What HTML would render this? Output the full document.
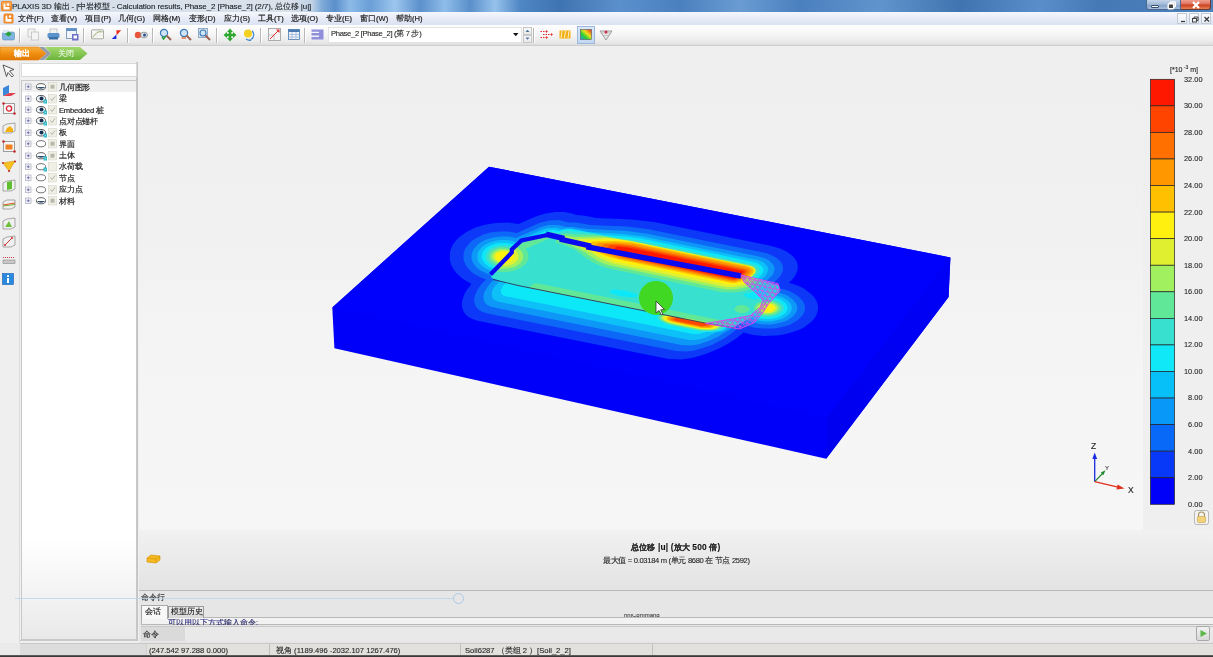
<!DOCTYPE html>
<html><head><meta charset="utf-8">
<style>
*{margin:0;padding:0;box-sizing:border-box}
html,body{width:1213px;height:657px;overflow:hidden;-webkit-font-smoothing:antialiased;background:#efefef;font-family:"Liberation Sans",sans-serif;font-size:8px;color:#000}
.a{position:absolute}
.row,.mi,.lg,#title .t,.a{will-change:transform}
.row,.mi{-webkit-text-stroke:0.18px #222}
.a{-webkit-text-stroke:0.12px #333}
.lg{-webkit-text-stroke:0.1px #333}
#title{left:0;top:0;width:1213px;height:12px;background:linear-gradient(90deg,#c9d6e4 0,#d6dfe9 40px,#d9e1ea 290px,#c0d2e6 312px,#7eaad8 322px,#5a8fcb 335px,#8dbbe8 350px,#6a9ed6 370px,#9cc6ee 395px,#5b90cc 420px,#8fbde9 445px,#5a8fca 470px,#96c2ec 495px,#4f86c4 520px,#3f74b2 560px,#5a90cc 620px,#4a80bf 680px,#6a9cd2 740px,#4a80bf 800px,#5f94cc 880px,#3f74b0 960px,#5a8ecb 1040px,#4479b6 1100px,#4b81bc 1213px)}
.mdi{top:13px;width:10px;height:11px;background:linear-gradient(#fbfcfe,#e6ecf6);border:1px solid #c4cad4}
#title .t{left:12px;top:1px;font-size:8px;color:#101820;white-space:nowrap;letter-spacing:-0.1px}
#menu{left:0;top:12px;width:1213px;height:13px;background:linear-gradient(#f5f7fc,#e4e9f6 60%,#dbe2f2)}
.mi{position:absolute;top:14px;font-size:7.6px;color:#202020;white-space:nowrap}
#tool{left:0;top:25px;width:1213px;height:21px;background:linear-gradient(#fefefe,#f6f6f6 45%,#e9e9e9 85%,#dddddd);border-bottom:1px solid #cfcfcf}
.sep{position:absolute;top:28px;width:2px;height:15px;border-left:1px solid #b8b8b8;border-right:1px solid #fff}
svg{position:absolute;overflow:visible}
#left{left:0;top:46px;width:20px;height:597px;background:#efefef}
#panel{left:20px;top:62px;width:118px;height:579px;border-right:2px solid #c4c4c4;border-bottom:1px solid #c9c9c9;background:#f0f0f0}
#search{left:21px;top:63px;width:116px;height:14px;background:#fff;border:1px solid #dadada}
#tree{left:21px;top:80px;width:116px;height:560px;border:1px solid #c8c8c8;background:linear-gradient(#fff 0,#fff 82%,#e9e9e9 100%)}
.row{position:absolute;left:59px;font-size:7.6px;letter-spacing:-0.2px;color:#222;white-space:nowrap;height:11px;line-height:11px}
#view{left:139px;top:46px;width:1074px;height:484px;background:#f2f2f2}
#cap{left:139px;top:530px;width:1074px;height:60px;background:linear-gradient(#f1f1f1,#e3e3e3)}
#cmd{left:139px;top:590px;width:1074px;height:53px;background:#e6e6e6;border-top:1px solid #b9b9b9}
#status{left:0;top:643px;width:1213px;height:12px;background:#e3e1de;border-top:1px solid #c8c8c8}
#bot{left:0;top:655px;width:1213px;height:2px;background:linear-gradient(#6a6a6a,#2a2a2a)}
.lg{position:absolute;left:1172px;width:30.5px;text-align:right;font-size:7.4px;color:#1a1a1a;white-space:nowrap}
</style></head><body>
<div id="title" class="a"><span class="a t">PLAXIS 3D 输出 - [中岩模型 - Calculation results, Phase_2 [Phase_2] (2/7), 总位移 |u|]</span></div>
<svg style="left:0;top:0" width="13" height="12"><rect x="1" y="1" width="11" height="10" rx="1.5" fill="#f08a2a"/><rect x="2" y="2" width="9" height="4" fill="#f6b060" opacity=".7"/><path d="M3.5 4.5 L5 3 L5.5 7 L9.5 7 L9.5 9.5 L3.5 9.5 Z" fill="#fff"/><circle cx="8" cy="4.5" r="1.3" fill="#fff"/></svg>
<div class="a" style="left:1146px;top:0;width:18px;height:10px;border:1px solid #4b6a92;border-top:0;border-radius:0 0 0 3px;background:linear-gradient(#c6d6ea,#9fb8d6 50%,#7f9dc4 51%,#a9c0dc)"></div>
<div class="a" style="left:1151px;top:5px;width:8px;height:3px;background:#fff;border:0.6px solid #3a5070;border-radius:1px"></div>
<div class="a" style="left:1163px;top:0;width:18px;height:10px;border:1px solid #4b6a92;border-top:0;border-left:0;background:linear-gradient(#c6d6ea,#9fb8d6 50%,#7f9dc4 51%,#a9c0dc)"></div>
<svg style="left:1167px;top:1px" width="10" height="9"><rect x="3" y="0.8" width="5.5" height="5" rx="1" fill="#d8d8d8" stroke="#fff" stroke-width="1.2"/><rect x="1.2" y="2.8" width="5.5" height="5" rx="1" fill="#444" stroke="#fff" stroke-width="1.4"/></svg>
<div class="a" style="left:1181px;top:0;width:30px;height:10px;border:1px solid #6b3a30;border-top:0;border-left:0;border-radius:0 0 3px 0;background:linear-gradient(#f0a090,#e07060 45%,#c8401c 55%,#e8805a)"></div>
<svg style="left:1191px;top:1px" width="10" height="8"><path d="M2 1 L8 7 M8 1 L2 7" stroke="#fff" stroke-width="2.2"/></svg>
<div id="menu" class="a"></div>
<svg style="left:3px;top:13px" width="12" height="12"><rect x="0.5" y="0.5" width="10" height="10" rx="1.5" fill="#f08a2a"/><path d="M2.5 3.5 L4 2 L4.5 6 L8.5 6 L8.5 8.7 L2.5 8.7 Z" fill="#fff"/><circle cx="7" cy="3.5" r="1.2" fill="#fff"/></svg>
<div class="mi" style="left:18px">文件(F)</div>
<div class="mi" style="left:51px">查看(V)</div>
<div class="mi" style="left:85px">项目(P)</div>
<div class="mi" style="left:118px">几何(G)</div>
<div class="mi" style="left:153px">网格(M)</div>
<div class="mi" style="left:189px">变形(D)</div>
<div class="mi" style="left:224px">应力(S)</div>
<div class="mi" style="left:258px">工具(T)</div>
<div class="mi" style="left:291px">选项(O)</div>
<div class="mi" style="left:326px">专业(E)</div>
<div class="mi" style="left:360px">窗口(W)</div>
<div class="mi" style="left:396px">帮助(H)</div>
<div class="a mdi" style="left:1177px"><svg width="10" height="11" style="position:absolute;left:0;top:0"><path d="M3 7.5 H7" stroke="#333" stroke-width="1.2"/></svg></div>
<div class="a mdi" style="left:1189px"><svg width="10" height="11" style="position:absolute;left:0;top:0"><rect x="2.5" y="4.5" width="4" height="3.5" fill="none" stroke="#333" stroke-width=".9"/><path d="M4 4.5 V3 H8 V6.5 H6.5" fill="none" stroke="#333" stroke-width=".9"/></svg></div>
<div class="a mdi" style="left:1201px"><svg width="10" height="11" style="position:absolute;left:0;top:0"><path d="M2.5 3 L7 7.5 M7 3 L2.5 7.5" stroke="#333" stroke-width="1.1"/></svg></div>
<div id="tool" class="a"></div>
<div class="sep" style="left:19px"></div><div class="sep" style="left:83px"></div><div class="sep" style="left:127px"></div><div class="sep" style="left:152px"></div><div class="sep" style="left:216px"></div><div class="sep" style="left:260px"></div><div class="sep" style="left:304px"></div><div class="sep" style="left:533px"></div>
<!-- toolbar icons -->
<svg style="left:2px;top:28px" width="13" height="13"><rect x="0.5" y="4" width="12" height="8" rx="1.5" fill="#7fb4e0" stroke="#5a8cc0" stroke-width=".6"/><rect x="1" y="2" width="6" height="3" fill="#d8e6f2"/><path d="M3 6 L6.5 3.5 L10 6 L6.5 8.5Z" fill="#2aa23a"/></svg>
<svg style="left:27px;top:28px" width="13" height="13"><rect x="1" y="1" width="7" height="8" fill="#f4f4f4" stroke="#b8b8b8" stroke-width=".7"/><rect x="4.5" y="4" width="7" height="8" fill="#f4f4f4" stroke="#b8b8b8" stroke-width=".7"/></svg>
<svg style="left:47px;top:28px" width="13" height="13"><rect x="3" y="1" width="7" height="5" fill="#f2f2f2" stroke="#aaa" stroke-width=".6"/><rect x="0.5" y="5" width="12" height="5" rx="1.5" fill="#5a92cc"/><rect x="2" y="9" width="9" height="2.5" fill="#3c6ea8"/></svg>
<svg style="left:66px;top:28px" width="13" height="13"><rect x="0.5" y="0.5" width="10" height="10" fill="#f0f4f8" stroke="#6a8ab0" stroke-width=".8"/><rect x="0.5" y="0.5" width="10" height="2.5" fill="#5d8fca"/><rect x="6" y="6" width="6.5" height="6.5" fill="#6f6fc8"/><rect x="7.5" y="7.5" width="3.5" height="3" fill="#fff"/></svg>
<svg style="left:91px;top:29px" width="13" height="11"><rect x="0.5" y="0.8" width="12" height="9" rx="0.8" fill="#f6f6f2" stroke="#a0a098" stroke-width=".9"/><path d="M6 1 V10 M0.5 6 H12.5" stroke="#e0e0dc" stroke-width=".5"/><path d="M1.5 8.5 L4.5 5 Q6 2.8 8 2.8 L11.5 2.8" fill="none" stroke="#8aa868" stroke-width=".9"/></svg>
<svg style="left:111px;top:28px" width="11" height="13"><path d="M5.4 2.3 L10.2 2.3 L5.6 7.2 Z" fill="#f02818"/><path d="M0.8 10.9 L5.4 10.9 L5.4 6.6 Z" fill="#1828e8"/></svg>
<svg style="left:134px;top:30px" width="14" height="10"><circle cx="4" cy="5" r="3.2" fill="#e8553a"/><ellipse cx="10" cy="5" rx="3.5" ry="2.8" fill="#dde6f0" stroke="#666" stroke-width=".6"/><circle cx="10.5" cy="5" r="1.5" fill="#2a5080"/></svg>
<svg style="left:159px;top:28px" width="13" height="13"><circle cx="5" cy="5" r="3.6" fill="#cfe4f6" stroke="#3a7ab8" stroke-width="1.2"/><path d="M7.5 7.5 L12 12" stroke="#a06050" stroke-width="2"/><path d="M3 9 L4.5 11 L7 8" stroke="#20a030" stroke-width="1.4" fill="none"/></svg>
<svg style="left:179px;top:28px" width="13" height="13"><circle cx="5" cy="5" r="3.6" fill="#cfe4f6" stroke="#3a7ab8" stroke-width="1.2"/><path d="M7.5 7.5 L12 12" stroke="#a06050" stroke-width="2"/><path d="M2.5 10 H7" stroke="#e06030" stroke-width="1.3"/></svg>
<svg style="left:198px;top:28px" width="13" height="13"><rect x="0.5" y="0.5" width="9" height="9" fill="#d8e4f0" stroke="#7a9ac0" stroke-width=".8"/><circle cx="5" cy="5" r="3" fill="#cfe4f6" stroke="#3a7ab8" stroke-width="1.1"/><path d="M7.5 7.5 L12 12" stroke="#a06050" stroke-width="2"/></svg>
<svg style="left:223px;top:28px" width="14" height="14"><path d="M7 0.5 L10 4 H8.3 V5.7 H10 V4 L13.5 7 L10 10 V8.3 H8.3 V10 H10 L7 13.5 L4 10 H5.7 V8.3 H4 V10 L0.5 7 L4 4 V5.7 H5.7 V4 H4 Z" fill="#30a830"/></svg>
<svg style="left:243px;top:28px" width="14" height="14"><circle cx="5" cy="5.5" r="4" fill="#f4d020"/><path d="M9 2 Q13 5 10 11 L7 12 L9.5 9 Q11 6 9 4 Z" fill="#3a86d0"/><path d="M3 11 Q6 13 8 12" stroke="#3a86d0" stroke-width="1.5" fill="none"/></svg>
<svg style="left:268px;top:28px" width="13" height="13"><rect x="0.5" y="0.5" width="12" height="12" fill="#f6f6f6" stroke="#9a9a9a" stroke-width=".8"/><path d="M0.5 7 H6 V12.5" fill="none" stroke="#aaa" stroke-width=".6"/><path d="M2 11 L11 2" stroke="#e03030" stroke-width="1"/><path d="M8 1.5 L11.5 1.5 L11.5 5" fill="#e03030"/></svg>
<svg style="left:288px;top:29px" width="12" height="11"><rect x="0.5" y="0.5" width="11" height="10" fill="#eef3f8" stroke="#4a7ab0" stroke-width=".8"/><rect x="0.5" y="0.5" width="11" height="2.5" fill="#4a7ab0"/><path d="M0.5 5.5 H11.5 M0.5 8 H11.5 M4 3 V10.5 M8 3 V10.5" stroke="#8aaad0" stroke-width=".6"/></svg>
<svg style="left:311px;top:29px" width="13" height="11"><path d="M0.5 0.5 H12.5 V10.5 H0.5 V8 H8 V6.5 H0.5 V4 H8 V2.8 H0.5 Z" fill="#8f8fdc"/></svg>
<div class="a" style="left:328px;top:27px;width:194px;height:16px;background:#fff;border:1px solid #e4e4e4"></div>
<div class="a" style="left:331px;top:29px;font-size:7.6px;color:#222;white-space:nowrap;letter-spacing:-0.3px">Phase_2 [Phase_2] (第 7 步)</div>
<svg style="left:513px;top:33px" width="6" height="4"><path d="M0 0 H5.5 L2.75 3.2Z" fill="#111"/></svg>
<div class="a" style="left:523px;top:27px;width:9px;height:8px;background:linear-gradient(#fafafa,#e8e8e8);border:1px solid #c8c8c8"></div>
<div class="a" style="left:523px;top:35px;width:9px;height:8px;background:linear-gradient(#fafafa,#e8e8e8);border:1px solid #c8c8c8"></div>
<svg style="left:525px;top:29px" width="6" height="12"><path d="M0.5 3 L2.5 0.8 L4.5 3Z M0.5 8.5 L2.5 10.7 L4.5 8.5Z" fill="#4a6fa0"/></svg>
<svg style="left:540px;top:29px" width="14" height="11"><path d="M0.5 2.5 H6 M3 5.5 H11 M0.5 8.5 H6" stroke="#e82a2a" stroke-width="1" stroke-dasharray="1.5 1"/><path d="M6 1 L8 2.5 L6 4Z M11 4 L13 5.5 L11 7Z M6 7 L8 8.5 L6 10Z" fill="#e82a2a"/></svg>
<svg style="left:559px;top:30px" width="12" height="9"><rect x="0.5" y="0.5" width="11" height="8" fill="#f2b010"/><path d="M3 1 L2 8 M6.5 1 L5.5 8 M10 1 L9 8" stroke="#fff" stroke-width="1" opacity=".8"/></svg>
<div class="a" style="left:577px;top:26px;width:18px;height:18px;background:linear-gradient(#dae8f8,#c4d8f0);border:1px solid #9ab8dc"></div>
<svg style="left:580px;top:29px" width="12" height="11"><defs><linearGradient id="rb" x1="0" y1="1" x2="1" y2="0"><stop offset="0" stop-color="#20a0e0"/><stop offset=".35" stop-color="#30d030"/><stop offset=".6" stop-color="#f0e020"/><stop offset="1" stop-color="#e82020"/></linearGradient></defs><rect x="0.5" y="0.5" width="11" height="10" fill="url(#rb)" stroke="#555" stroke-width=".6"/></svg>
<svg style="left:599px;top:29px" width="14" height="12"><path d="M1 2 H13 L7 11 Z" fill="#e8e8e8" stroke="#888" stroke-width=".8"/><path d="M3 4 H11 M4.5 6.5 H9.5" stroke="#aaa" stroke-width=".6"/><circle cx="7" cy="3" r="1.5" fill="#d03050"/></svg>

<div id="left" class="a"></div>
<!-- breadcrumb -->
<svg style="left:0;top:46px" width="90" height="15"><defs><linearGradient id="og" x1="0" y1="0" x2="0" y2="1"><stop offset="0" stop-color="#f7b040"/><stop offset=".5" stop-color="#f08f10"/><stop offset="1" stop-color="#e07800"/></linearGradient><linearGradient id="gg" x1="0" y1="0" x2="0" y2="1"><stop offset="0" stop-color="#a2d86e"/><stop offset="1" stop-color="#6cb43a"/></linearGradient></defs>
<path d="M45 1 H80 L87.5 7.5 L80 14 H45 L51 7.5Z" fill="url(#gg)"/>
<path d="M39 1 L46.5 7.5 L39 14 H44 L51 7.5 L44 1Z" fill="#949cac"/>
<path d="M0 1 H38.5 L46 7.5 L38.5 14 H0Z" fill="url(#og)" stroke="#e07a10" stroke-width=".6"/>
</svg>
<div class="a" style="left:14px;top:48px;font-size:8px;color:#fff;font-weight:bold;white-space:nowrap;-webkit-text-stroke:0.1px #fff">输出</div>
<div class="a" style="left:58px;top:48px;font-size:8px;color:#eaf6e0;white-space:nowrap;-webkit-text-stroke:0.1px #eaf6e0">关闭</div>
<!-- left vertical toolbar -->
<svg style="left:2px;top:64px" width="14" height="14"><path d="M1 1 L12 5.5 L7.5 7 L11.5 11.5 L10 13 L6 8.5 L4.5 12.5 Z" fill="#fafafa" stroke="#444" stroke-width=".9"/></svg>
<svg style="left:2px;top:84px" width="14" height="13"><path d="M1 4 L7 1 L7 9 L1 12Z" fill="#3a86d8"/><path d="M1 12 L7 9 L14 9 L9 12Z" fill="#e04050"/></svg>
<svg style="left:2px;top:102px" width="14" height="14"><rect x="1.5" y="1.5" width="11" height="10" fill="#f6f6f6" stroke="#888" stroke-width=".8"/><circle cx="7" cy="6.5" r="2.6" fill="none" stroke="#e02030" stroke-width="1.3"/><circle cx="1.5" cy="1.5" r="1.2" fill="#c02020"/><circle cx="12.5" cy="11.5" r="1.2" fill="#c02020"/></svg>
<svg style="left:2px;top:121px" width="14" height="14"><path d="M1 5 L5 3 L13 2 L13 10 L9 12 L1 12Z" fill="#f0f0f0" stroke="#888" stroke-width=".7"/><path d="M3 11 L5 7 L8 5 L11 8 L11 11Z" fill="#f4b010"/></svg>
<svg style="left:2px;top:140px" width="14" height="14"><rect x="1.5" y="1.5" width="11" height="10" fill="#f6f6f6" stroke="#888" stroke-width=".8"/><rect x="3.5" y="4.5" width="7" height="5" fill="#f08020"/><circle cx="1.5" cy="1.5" r="1.2" fill="#c02020"/><circle cx="12.5" cy="11.5" r="1.2" fill="#c02020"/></svg>
<svg style="left:2px;top:160px" width="14" height="13"><path d="M1 3 L13 1 L7 11Z" fill="#f8c020" stroke="#d09000" stroke-width=".6"/><circle cx="1" cy="3" r="1.1" fill="#c03030"/><circle cx="13" cy="1.5" r="1.1" fill="#c03030"/><circle cx="7" cy="11" r="1.1" fill="#c03030"/></svg>
<svg style="left:2px;top:179px" width="14" height="14"><path d="M1 4 L5 2 L13 1 L13 10 L9 12 L1 12Z" fill="#f0f0f0" stroke="#888" stroke-width=".7"/><path d="M5 3 L10 2 L10 10 L5 11Z" fill="#60c030"/></svg>
<svg style="left:2px;top:198px" width="14" height="13"><path d="M1 4 L5 2 L13 2 L13 9 L9 11 L1 11Z" fill="#f0f0f0" stroke="#888" stroke-width=".7"/><path d="M1 7 L13 5" stroke="#e05030" stroke-width="1"/><path d="M1 8 L13 6.5" stroke="#70b030" stroke-width="1"/></svg>
<svg style="left:2px;top:217px" width="14" height="14"><path d="M1 4 L5 2 L13 1 L13 10 L9 12 L1 12Z" fill="#f0f0f0" stroke="#888" stroke-width=".7"/><path d="M3 10 L7 4 L10 10Z" fill="#70c040"/></svg>
<svg style="left:2px;top:235px" width="14" height="14"><path d="M1 4 L5 2 L13 1 L13 10 L9 12 L1 12Z" fill="#f0f0f0" stroke="#888" stroke-width=".7"/><path d="M3 10 L10 3" stroke="#d03030" stroke-width="1"/><circle cx="3" cy="10" r="1" fill="#d03030"/><circle cx="10" cy="3" r="1" fill="#d03030"/></svg>
<svg style="left:2px;top:256px" width="14" height="9"><path d="M1 1.5 H13" stroke="#d04040" stroke-width="1" stroke-dasharray="1 1"/><rect x="1" y="4" width="12" height="3.5" fill="#c8c8c8" stroke="#888" stroke-width=".6"/></svg>
<svg style="left:2px;top:273px" width="13" height="13"><rect x="0.5" y="0.5" width="11" height="11" fill="#2a8ae0" stroke="#1a60b0" stroke-width=".6"/><rect x="5" y="2.2" width="2" height="1.8" fill="#fff"/><rect x="5" y="5" width="2" height="5" fill="#fff"/></svg>
<div class="a" style="left:19px;top:62px;width:1px;height:581px;background:#dcdcdc"></div>
<div id="panel" class="a"></div>
<div id="search" class="a"></div>
<div id="tree" class="a"></div>
<div class="a" style="left:22px;top:81px;width:114px;height:11px;background:#f0f0f0"></div>
<div class="a" style="left:28px;top:91px;width:0;height:111px;border-left:1px dotted #dedede"></div>

<svg style="left:25px;top:81.3px" width="35" height="12">
<rect x="0.5" y="3" width="5.5" height="5.5" fill="#f4f4fa" stroke="#9a9ab0" stroke-width=".6"/><path d="M1.8 5.75 H4.7 M3.25 4.3 V7.2" stroke="#4a4a90" stroke-width=".7"/><path d="M6.5 5.75 H10" stroke="#c4c4c4" stroke-width=".6" stroke-dasharray="1 1"/>
<ellipse cx="16" cy="5.75" rx="4.6" ry="3.1" fill="#fff" stroke="#3a3a3a" stroke-width=".8"/><path d="M11.6 6 Q16 9.5 20.4 6Z" fill="#2a4a70"/>
<rect x="23.5" y="1.5" width="8" height="8.5" fill="#efefe6" stroke="#d4d4c8" stroke-width=".6"/>
<rect x="25.5" y="3.7" width="4" height="4" fill="#b8b8a8"/>
</svg>
<div class="row" style="top:81.8px">几何图形</div>
<svg style="left:25px;top:92.7px" width="35" height="12">
<rect x="0.5" y="3" width="5.5" height="5.5" fill="#f4f4fa" stroke="#9a9ab0" stroke-width=".6"/><path d="M1.8 5.75 H4.7 M3.25 4.3 V7.2" stroke="#4a4a90" stroke-width=".7"/><path d="M6.5 5.75 H10" stroke="#c4c4c4" stroke-width=".6" stroke-dasharray="1 1"/>
<ellipse cx="16" cy="5.75" rx="4.6" ry="3.3" fill="#eef4fa" stroke="#3a3a3a" stroke-width=".8"/><circle cx="16.5" cy="5.5" r="2" fill="#1a3050"/>
<rect x="18.5" y="6.5" width="3.5" height="4" fill="#30b8c8"/><path d="M19.5 9 L21 8" stroke="#fff" stroke-width=".6"/>
<rect x="23.5" y="1.5" width="8" height="8.5" fill="#efefe6" stroke="#d4d4c8" stroke-width=".6"/>
<path d="M25.5 5.5 L27 7.5 L30 3.5" fill="none" stroke="#9a9a90" stroke-width=".7"/>
</svg>
<div class="row" style="top:93.2px">梁</div>
<svg style="left:25px;top:104.0px" width="35" height="12">
<rect x="0.5" y="3" width="5.5" height="5.5" fill="#f4f4fa" stroke="#9a9ab0" stroke-width=".6"/><path d="M1.8 5.75 H4.7 M3.25 4.3 V7.2" stroke="#4a4a90" stroke-width=".7"/><path d="M6.5 5.75 H10" stroke="#c4c4c4" stroke-width=".6" stroke-dasharray="1 1"/>
<ellipse cx="16" cy="5.75" rx="4.6" ry="3.3" fill="#eef4fa" stroke="#3a3a3a" stroke-width=".8"/><circle cx="16.5" cy="5.5" r="2" fill="#1a3050"/>
<rect x="18.5" y="6.5" width="3.5" height="4" fill="#30b8c8"/><path d="M19.5 9 L21 8" stroke="#fff" stroke-width=".6"/>
<rect x="23.5" y="1.5" width="8" height="8.5" fill="#efefe6" stroke="#d4d4c8" stroke-width=".6"/>
<path d="M25.5 5.5 L27 7.5 L30 3.5" fill="none" stroke="#9a9a90" stroke-width=".7"/>
</svg>
<div class="row" style="top:104.5px">Embedded 桩</div>
<svg style="left:25px;top:115.4px" width="35" height="12">
<rect x="0.5" y="3" width="5.5" height="5.5" fill="#f4f4fa" stroke="#9a9ab0" stroke-width=".6"/><path d="M1.8 5.75 H4.7 M3.25 4.3 V7.2" stroke="#4a4a90" stroke-width=".7"/><path d="M6.5 5.75 H10" stroke="#c4c4c4" stroke-width=".6" stroke-dasharray="1 1"/>
<ellipse cx="16" cy="5.75" rx="4.6" ry="3.3" fill="#eef4fa" stroke="#3a3a3a" stroke-width=".8"/><circle cx="16.5" cy="5.5" r="2" fill="#1a3050"/>
<rect x="18.5" y="6.5" width="3.5" height="4" fill="#30b8c8"/><path d="M19.5 9 L21 8" stroke="#fff" stroke-width=".6"/>
<rect x="23.5" y="1.5" width="8" height="8.5" fill="#efefe6" stroke="#d4d4c8" stroke-width=".6"/>
<path d="M25.5 5.5 L27 7.5 L30 3.5" fill="none" stroke="#9a9a90" stroke-width=".7"/>
</svg>
<div class="row" style="top:115.9px">点对点锚杆</div>
<svg style="left:25px;top:126.8px" width="35" height="12">
<rect x="0.5" y="3" width="5.5" height="5.5" fill="#f4f4fa" stroke="#9a9ab0" stroke-width=".6"/><path d="M1.8 5.75 H4.7 M3.25 4.3 V7.2" stroke="#4a4a90" stroke-width=".7"/><path d="M6.5 5.75 H10" stroke="#c4c4c4" stroke-width=".6" stroke-dasharray="1 1"/>
<ellipse cx="16" cy="5.75" rx="4.6" ry="3.3" fill="#eef4fa" stroke="#3a3a3a" stroke-width=".8"/><circle cx="16.5" cy="5.5" r="2" fill="#1a3050"/>
<rect x="18.5" y="6.5" width="3.5" height="4" fill="#30b8c8"/><path d="M19.5 9 L21 8" stroke="#fff" stroke-width=".6"/>
<rect x="23.5" y="1.5" width="8" height="8.5" fill="#efefe6" stroke="#d4d4c8" stroke-width=".6"/>
<path d="M25.5 5.5 L27 7.5 L30 3.5" fill="none" stroke="#9a9a90" stroke-width=".7"/>
</svg>
<div class="row" style="top:127.3px">板</div>
<svg style="left:25px;top:138.1px" width="35" height="12">
<rect x="0.5" y="3" width="5.5" height="5.5" fill="#f4f4fa" stroke="#9a9ab0" stroke-width=".6"/><path d="M1.8 5.75 H4.7 M3.25 4.3 V7.2" stroke="#4a4a90" stroke-width=".7"/><path d="M6.5 5.75 H10" stroke="#c4c4c4" stroke-width=".6" stroke-dasharray="1 1"/>
<ellipse cx="16" cy="5.75" rx="4.6" ry="3.1" fill="#fff" stroke="#3a3a3a" stroke-width=".7"/>
<rect x="23.5" y="1.5" width="8" height="8.5" fill="#efefe6" stroke="#d4d4c8" stroke-width=".6"/>
<rect x="25.5" y="3.7" width="4" height="4" fill="#b8b8a8"/>
</svg>
<div class="row" style="top:138.6px">界面</div>
<svg style="left:25px;top:149.5px" width="35" height="12">
<rect x="0.5" y="3" width="5.5" height="5.5" fill="#f4f4fa" stroke="#9a9ab0" stroke-width=".6"/><path d="M1.8 5.75 H4.7 M3.25 4.3 V7.2" stroke="#4a4a90" stroke-width=".7"/><path d="M6.5 5.75 H10" stroke="#c4c4c4" stroke-width=".6" stroke-dasharray="1 1"/>
<ellipse cx="16" cy="5.75" rx="4.6" ry="3.1" fill="#fff" stroke="#3a3a3a" stroke-width=".8"/><path d="M11.6 6 Q16 9.5 20.4 6Z" fill="#2a4a70"/>
<rect x="18.5" y="6.5" width="3.5" height="4" fill="#30b8c8"/><path d="M19.5 9 L21 8" stroke="#fff" stroke-width=".6"/>
<rect x="23.5" y="1.5" width="8" height="8.5" fill="#efefe6" stroke="#d4d4c8" stroke-width=".6"/>
<rect x="25.5" y="3.7" width="4" height="4" fill="#b8b8a8"/>
</svg>
<div class="row" style="top:150.0px">土体</div>
<svg style="left:25px;top:160.9px" width="35" height="12">
<rect x="0.5" y="3" width="5.5" height="5.5" fill="#f4f4fa" stroke="#9a9ab0" stroke-width=".6"/><path d="M1.8 5.75 H4.7 M3.25 4.3 V7.2" stroke="#4a4a90" stroke-width=".7"/><path d="M6.5 5.75 H10" stroke="#c4c4c4" stroke-width=".6" stroke-dasharray="1 1"/>
<ellipse cx="16" cy="5.75" rx="4.6" ry="3.1" fill="#fff" stroke="#3a3a3a" stroke-width=".7"/>
<rect x="18.5" y="6.5" width="3.5" height="4" fill="#30b8c8"/><path d="M19.5 9 L21 8" stroke="#fff" stroke-width=".6"/>
<rect x="23.5" y="1.5" width="8" height="8.5" fill="#efefe6" stroke="#d4d4c8" stroke-width=".6"/>
</svg>
<div class="row" style="top:161.4px">水荷载</div>
<svg style="left:25px;top:172.3px" width="35" height="12">
<rect x="0.5" y="3" width="5.5" height="5.5" fill="#f4f4fa" stroke="#9a9ab0" stroke-width=".6"/><path d="M1.8 5.75 H4.7 M3.25 4.3 V7.2" stroke="#4a4a90" stroke-width=".7"/><path d="M6.5 5.75 H10" stroke="#c4c4c4" stroke-width=".6" stroke-dasharray="1 1"/>
<ellipse cx="16" cy="5.75" rx="4.6" ry="3.1" fill="#fff" stroke="#3a3a3a" stroke-width=".7"/>
<rect x="23.5" y="1.5" width="8" height="8.5" fill="#efefe6" stroke="#d4d4c8" stroke-width=".6"/>
<path d="M25.5 5.5 L27 7.5 L30 3.5" fill="none" stroke="#9a9a90" stroke-width=".7"/>
</svg>
<div class="row" style="top:172.8px">节点</div>
<svg style="left:25px;top:183.6px" width="35" height="12">
<rect x="0.5" y="3" width="5.5" height="5.5" fill="#f4f4fa" stroke="#9a9ab0" stroke-width=".6"/><path d="M1.8 5.75 H4.7 M3.25 4.3 V7.2" stroke="#4a4a90" stroke-width=".7"/><path d="M6.5 5.75 H10" stroke="#c4c4c4" stroke-width=".6" stroke-dasharray="1 1"/>
<ellipse cx="16" cy="5.75" rx="4.6" ry="3.1" fill="#fff" stroke="#3a3a3a" stroke-width=".7"/>
<rect x="23.5" y="1.5" width="8" height="8.5" fill="#efefe6" stroke="#d4d4c8" stroke-width=".6"/>
<path d="M25.5 5.5 L27 7.5 L30 3.5" fill="none" stroke="#9a9a90" stroke-width=".7"/>
</svg>
<div class="row" style="top:184.1px">应力点</div>
<svg style="left:25px;top:195.0px" width="35" height="12">
<rect x="0.5" y="3" width="5.5" height="5.5" fill="#f4f4fa" stroke="#9a9ab0" stroke-width=".6"/><path d="M1.8 5.75 H4.7 M3.25 4.3 V7.2" stroke="#4a4a90" stroke-width=".7"/><path d="M6.5 5.75 H10" stroke="#c4c4c4" stroke-width=".6" stroke-dasharray="1 1"/>
<ellipse cx="16" cy="5.75" rx="4.6" ry="3.1" fill="#fff" stroke="#3a3a3a" stroke-width=".8"/><path d="M11.6 6 Q16 9.5 20.4 6Z" fill="#2a4a70"/>
<rect x="23.5" y="1.5" width="8" height="8.5" fill="#efefe6" stroke="#d4d4c8" stroke-width=".6"/>
<rect x="25.5" y="3.7" width="4" height="4" fill="#b8b8a8"/>
</svg>
<div class="row" style="top:195.5px">材料</div>
<div id="view" class="a"></div>
<div class="a" style="left:139px;top:46px;width:1004px;height:484px;background:linear-gradient(#efefef 0%,#f1f1f1 40%,#f5f5f5 70%,#f6f6f6 100%)"></div>
<svg style="left:0;top:0" width="1213" height="657">
<defs>
<filter id="bl" x="-10%" y="-10%" width="120%" height="120%"><feGaussianBlur stdDeviation="0.7"/></filter>
<clipPath id="topclip"><polygon points="489,166.7 950.4,257.4 827,417.5 332.3,307.4"/></clipPath>
</defs>
<polygon points="489,166.7 950.4,257.4 948.6,297.1 826.2,458.7 334.4,348.2 332.3,307.4" fill="#0000fa"/>
<linearGradient id="rf" x1="0" y1="0" x2="1" y2="0"><stop offset="0" stop-color="#0000f0"/><stop offset="1" stop-color="#0000f6"/></linearGradient><polygon points="827,417.5 950.4,257.4 948.6,297.1 826.2,458.7" fill="url(#rf)"/>
<polygon points="489,166.7 950.4,257.4 827,417.5 332.3,307.4" fill="#0000fd"/>
<g clip-path="url(#topclip)">
<g filter="url(#bl)">
<path fill="#0838f8" fill-rule="evenodd" d="M449.9,252.4 449.9,260.6 451.4,265.4 454.4,270.6 456.4,273.1 462.1,278.4 471.4,283.9 467.4,288.9 464.4,294.1 462.1,300.9 461.9,305.9 462.9,310.1 465.1,313.9 468.4,316.9 472.4,319.1 476.6,320.6 668.6,359.1 681.6,359.4 694.4,357.4 707.1,353.6 719.1,348.6 727.6,344.1 736.9,338.1 743.6,332.6 753.1,334.9 763.6,335.9 777.1,335.4 783.9,334.4 791.1,332.6 797.6,330.4 803.9,327.4 810.6,322.6 813.1,320.1 816.1,315.9 818.1,309.6 817.9,304.9 816.6,301.1 814.1,297.1 810.6,293.4 803.9,288.6 797.6,285.6 789.6,283.1 789.1,282.6 792.4,279.6 795.6,275.1 797.6,269.9 797.9,265.9 796.9,261.9 794.9,258.4 791.6,254.9 786.6,251.4 780.1,248.4 771.6,245.9 654.1,221.9 632.1,219.6 596.9,217.9 583.4,215.6 576.4,215.1 571.9,213.4 564.6,212.1 555.1,212.1 545.1,213.6 535.6,216.4 518.6,223.9 508.4,222.6 495.4,222.9 483.6,224.9 475.6,227.4 467.1,231.4 459.4,236.9 456.4,239.9 452.9,244.6 450.9,248.9Z"/>
<path fill="#0868f8" fill-rule="evenodd" d="M731.6,327.1 732.9,327.1ZM730.4,326.9 731.1,326.9ZM463.6,253.6 463.4,257.4 463.9,260.6 465.6,264.9 467.9,268.1 471.6,271.9 475.1,274.4 480.9,277.4 486.1,279.4 481.1,284.6 477.1,290.4 474.6,296.4 474.1,299.9 474.6,303.6 476.1,306.9 479.1,309.9 482.6,311.9 487.6,313.4 676.1,351.1 687.1,351.4 694.1,350.4 701.4,348.6 711.9,344.9 724.1,338.6 732.1,333.1 737.6,328.4 732.9,327.4 740.6,323.1 744.9,324.9 753.4,327.4 762.9,328.6 774.1,328.4 784.6,326.4 790.4,324.4 797.9,320.1 802.4,315.6 804.4,311.9 804.9,309.9 804.9,306.1 804.4,304.1 802.4,300.4 797.9,295.9 794.9,293.9 789.1,291.1 784.6,289.6 779.6,288.6 778.9,288.1 778.9,285.4 772.9,283.4 778.1,278.6 780.6,275.6 782.6,271.6 783.1,268.4 782.4,264.6 780.6,261.6 777.9,258.9 774.9,256.9 770.1,254.6 763.4,252.6 647.1,228.9 625.9,226.6 590.4,224.9 576.1,222.6 568.1,222.6 558.9,220.1 549.1,220.4 539.4,222.9 516.9,232.9 507.9,231.4 499.1,231.4 490.4,232.6 483.4,234.6 476.4,237.9 471.6,241.1 466.4,246.9 464.9,249.6Z"/>
<path fill="#0898f8" fill-rule="evenodd" d="M730.4,326.9 731.1,326.9ZM499.6,280.6 500.4,280.6ZM471.6,254.4 471.6,258.6 472.6,261.9 475.1,265.9 477.9,268.6 480.6,270.6 485.4,273.1 490.6,274.9 492.1,278.1 499.6,280.4 498.6,280.6 494.6,279.6 493.4,280.1 488.4,285.4 484.4,292.1 483.4,296.1 483.9,300.4 484.9,302.4 487.4,304.9 490.1,306.4 494.4,307.6 681.6,345.1 691.4,345.4 699.9,343.9 708.4,341.1 718.4,336.4 725.1,331.9 728.1,330.9 732.1,327.4 731.6,327.1 731.9,326.9 733.6,327.1 746.1,320.1 752.9,322.6 762.6,324.4 771.4,324.4 781.1,322.6 787.1,320.4 791.6,317.6 795.1,314.1 797.1,309.9 797.1,306.1 796.4,303.9 792.9,299.4 787.1,295.6 778.6,292.6 779.1,292.1 778.9,285.4 766.1,281.1 772.1,275.4 773.6,272.9 774.4,270.1 774.4,268.1 773.4,265.1 770.6,261.9 768.1,260.1 763.9,258.1 756.4,256.1 648.4,233.9 627.4,231.1 588.4,229.1 579.1,228.1 573.1,226.9 566.1,226.9 557.4,224.9 548.6,224.9 541.1,226.9 515.9,238.1 508.9,236.6 501.1,236.4 493.4,237.4 486.6,239.4 481.9,241.6 477.9,244.4 473.4,249.6Z"/>
<path fill="#08c0f8" fill-rule="evenodd" d="M477.4,254.6 477.6,259.4 478.6,261.9 480.4,264.4 485.6,268.6 493.4,271.9 490.6,274.6 492.1,278.1 500.4,280.6 494.6,286.6 492.9,289.6 491.9,292.6 491.9,295.9 492.6,297.9 494.4,299.9 497.6,301.6 686.4,339.6 690.6,340.1 695.4,339.9 700.9,338.9 705.9,337.4 715.6,332.6 721.9,331.6 724.9,330.6 729.6,326.6 733.6,327.1 750.1,317.9 755.9,320.1 762.9,321.4 771.1,321.4 778.1,320.1 781.9,318.9 787.9,315.4 790.4,312.6 791.6,309.9 791.9,307.9 791.4,305.4 790.4,303.4 787.9,300.6 781.9,297.1 776.1,295.6 775.6,295.1 779.1,292.1 778.9,285.4 761.4,279.6 766.1,275.1 768.1,271.1 768.1,268.4 767.4,266.4 764.4,263.1 761.9,261.6 757.1,259.9 643.1,236.4 622.9,233.9 588.9,232.1 571.4,228.6 565.6,228.6 562.1,229.4 556.6,227.9 547.9,228.1 542.6,229.6 515.1,241.9 512.1,240.9 507.4,240.1 499.6,240.1 494.9,240.9 489.9,242.4 485.6,244.4 482.1,246.9 478.6,251.1Z"/>
<path fill="#10e8f8" fill-rule="evenodd" d="M481.9,254.6 481.9,258.4 484.4,263.1 488.4,266.4 491.9,268.1 495.9,269.4 490.6,274.6 492.1,278.1 506.4,282.4 502.9,286.1 500.9,290.6 501.4,293.4 502.6,294.9 504.4,295.9 693.1,333.9 697.6,334.1 701.1,333.6 705.6,332.1 711.9,332.1 719.4,331.1 723.6,329.6 727.4,326.1 733.6,327.1 753.1,316.1 757.1,317.9 763.9,319.1 770.1,319.1 776.9,317.9 782.1,315.6 784.9,313.6 786.4,311.9 787.6,308.4 787.4,306.4 786.4,304.1 783.6,301.4 779.6,299.1 773.9,297.6 773.4,297.1 779.1,292.1 778.9,285.4 758.9,279.1 757.6,278.4 762.1,274.1 763.4,271.4 763.4,268.9 762.6,267.1 761.1,265.4 756.9,262.9 749.1,260.9 640.9,238.6 626.1,236.6 603.4,235.1 570.1,229.1 564.4,229.4 558.9,231.1 553.6,229.9 551.9,229.9 549.6,230.6 545.4,231.1 531.4,237.4 521.6,239.6 518.4,243.1 514.9,244.6 506.4,242.9 500.6,242.9 495.9,243.6 491.9,244.9 488.4,246.6 485.6,248.6 483.1,251.6Z"/>
<path fill="#38e0d0" fill-rule="evenodd" d="M609.4,291.1 610.1,290.4 613.9,289.6 625.4,290.6 633.9,292.9 637.1,294.6 637.9,296.1 636.4,297.1 632.9,297.6 621.9,296.6 612.9,294.1 610.1,292.6ZM767.6,289.6 767.6,292.4 766.4,294.9 763.1,297.6 759.1,299.1 753.1,299.4 749.6,298.6 745.9,296.9 743.6,294.6 743.9,294.1 748.9,293.1 755.4,290.9 760.6,288.4 764.6,285.6 766.4,287.1ZM485.4,255.6 485.4,257.4 486.1,259.9 489.6,263.9 493.1,265.9 497.6,267.4 490.6,274.6 492.1,278.1 518.9,285.9 659.6,314.1 657.1,316.4 657.6,318.9 659.4,320.6 664.4,323.4 670.9,325.4 697.1,330.6 703.6,331.4 714.1,331.1 720.9,329.6 725.4,325.9 733.6,327.1 755.4,314.9 759.4,316.4 763.1,317.1 770.9,317.1 776.9,315.6 781.4,313.1 783.1,311.1 784.1,308.6 783.9,306.4 781.4,302.9 776.9,300.4 771.1,298.9 779.1,292.1 778.9,285.4 755.1,277.9 754.6,277.4 758.9,273.1 759.6,270.1 758.6,267.6 757.1,266.1 753.9,264.4 639.9,240.6 627.9,238.9 618.1,238.1 592.9,233.6 582.1,232.1 574.1,231.6 569.4,230.6 562.9,231.1 558.4,233.1 551.4,231.6 549.9,232.1 548.9,233.1 547.1,232.6 541.9,234.9 521.6,239.6 514.1,247.1 509.1,245.6 505.6,245.1 499.4,245.4 494.4,246.6 489.6,249.1 486.9,251.9Z"/>
<path fill="#60e898" fill-rule="evenodd" d="M734.6,308.4 734.6,309.6 735.9,311.4 739.6,312.9 744.4,312.9 746.9,312.1 748.9,310.6 749.4,309.4 749.1,308.1 747.6,306.6 745.4,305.6 742.6,305.1 740.4,305.1 737.4,305.9 735.6,306.9ZM781.1,307.1 780.4,305.4 777.6,302.9 773.6,301.1 769.6,300.4 769.1,300.9 762.9,301.1 758.1,302.6 754.9,305.1 753.9,307.1 753.9,308.9 754.9,310.9 757.4,312.9 756.9,313.4 758.9,314.4 764.4,315.6 769.6,315.6 775.1,314.4 778.4,312.6 780.4,310.6 781.1,308.9ZM528.9,287.9 660.6,314.1 661.4,314.6 659.1,316.6 658.9,317.6 660.4,319.9 664.9,322.6 672.1,324.9 697.1,329.9 702.9,330.6 711.6,330.6 715.6,330.1 719.4,329.1 723.4,325.6 731.1,326.6 734.9,323.1 538.4,283.6 533.4,283.6ZM555.4,241.4 555.6,242.4 556.4,242.9 559.4,243.4 565.6,245.4 575.6,249.9 584.1,256.6 592.1,261.9 599.6,265.6 606.6,268.1 720.6,291.9 731.4,292.6 739.4,291.9 746.1,290.4 751.4,288.6 756.1,286.4 759.9,283.9 763.4,280.6 761.1,279.6 751.9,277.9 751.4,277.4 755.4,273.6 756.1,272.4 756.4,270.1 755.6,268.4 754.4,267.1 749.9,265.1 629.6,240.4 594.9,234.6 576.1,234.6 567.6,233.4 564.6,233.4 561.4,234.6 558.1,237.6 559.1,237.9ZM552.4,235.6 550.1,233.4 549.1,233.1 539.4,235.4 519.9,244.1 517.9,243.6 512.6,249.1 507.6,247.4 501.1,247.1 497.1,247.9 493.1,249.6 490.1,252.1 488.9,254.1 488.9,258.9 490.1,260.9 493.1,263.4 496.4,264.9 499.4,265.6 494.1,271.1 499.4,272.1 507.6,272.1 514.9,270.6 521.4,267.6 526.1,263.4 528.4,258.9 528.4,254.1 527.1,251.1 525.4,248.9 551.4,237.4 552.4,236.4Z"/>
<path fill="#a0f060" fill-rule="evenodd" d="M660.9,317.1 661.1,318.6 663.1,320.6 670.1,323.6 699.9,329.6 706.1,330.1 714.1,329.6 717.9,328.6 721.1,325.6 711.4,324.4 709.6,323.1 706.6,322.1 686.4,318.1 679.6,318.4 664.4,315.1 662.9,315.1ZM778.6,307.4 777.6,305.4 775.9,303.9 772.4,302.4 767.9,301.9 767.4,302.4 764.1,302.4 759.9,303.6 756.9,306.1 756.4,308.6 756.9,309.9 758.6,311.6 758.1,312.1 762.6,313.9 767.6,314.4 772.4,313.6 775.9,312.1 778.1,309.9ZM521.4,251.1 519.1,248.9 515.4,246.6 514.9,246.6 512.1,249.6 511.9,250.6 506.1,248.9 499.4,249.1 494.1,251.4 492.1,253.4 491.4,254.9 491.1,257.1 492.1,259.6 494.1,261.6 496.9,263.1 500.9,264.1 496.9,268.1 501.1,268.9 508.1,268.6 513.9,267.1 517.4,265.4 521.4,261.9 523.1,258.1 523.1,254.9ZM558.9,241.1 566.6,243.4 572.6,245.9 584.6,251.9 588.4,254.9 598.1,260.9 604.9,263.9 610.1,265.6 723.1,289.1 726.9,289.6 734.6,289.6 743.4,288.1 748.6,286.4 753.1,284.1 758.9,279.4 750.9,277.4 754.9,273.6 755.9,271.4 755.9,270.1 755.4,268.9 753.6,267.1 749.6,265.4 630.6,240.9 603.4,236.4 574.4,236.9 564.9,235.6Z"/>
<path fill="#e0f030" fill-rule="evenodd" d="M662.6,317.4 662.6,318.4 663.9,319.9 667.4,321.9 670.9,323.1 700.9,329.1 710.4,329.4 714.1,328.9 716.6,327.9 719.1,325.4 708.1,323.9 706.6,322.9 686.9,318.9 683.4,319.1 664.9,315.4ZM758.6,307.4 758.6,308.6 759.9,311.4 762.9,312.6 765.9,313.1 770.1,312.9 772.6,312.1 775.1,310.6 776.4,308.6 776.1,306.6 774.1,304.6 771.1,303.4 768.1,302.9 762.4,304.1 760.4,305.1ZM516.9,252.1 512.9,249.1 512.1,249.6 511.9,252.1 511.4,252.6 509.4,251.4 506.1,250.4 500.9,250.4 495.9,252.4 493.9,254.6 493.6,257.6 494.4,259.1 496.6,261.1 502.1,262.9 499.4,265.6 505.9,265.9 508.9,265.4 513.9,263.4 515.4,262.4 517.9,259.4 518.4,258.1 518.4,254.9ZM573.4,243.9 592.9,253.6 596.9,256.4 604.1,260.1 613.1,263.4 726.4,286.9 734.6,287.1 743.6,285.4 749.6,282.6 754.6,278.4 750.4,277.4 754.6,273.1 755.4,270.6 754.9,269.1 753.6,267.6 750.1,265.9 630.1,241.1 609.6,237.9 578.9,238.9Z"/>
<path fill="#fff010" fill-rule="evenodd" d="M664.4,317.9 664.6,318.9 667.1,320.9 671.6,322.6 699.9,328.4 705.1,328.9 712.6,328.4 714.4,327.9 717.4,325.1 704.6,323.4 666.9,315.6ZM760.4,309.9 763.6,311.6 769.1,311.9 771.1,311.4 773.6,309.9 774.4,308.6 774.4,307.4 773.6,306.1 771.1,304.6 769.1,304.1 765.4,304.1ZM495.6,255.9 495.9,257.9 497.6,259.9 499.6,260.9 503.4,261.6 501.9,263.1 506.1,263.1 509.6,262.1 511.9,260.9 513.4,259.4 514.4,256.9 513.4,253.6 511.9,252.1 511.6,253.1 510.4,254.1 509.4,253.1 505.4,251.6 501.6,251.6 499.6,252.1 497.6,253.1 496.1,254.6ZM580.6,245.6 605.6,257.6 615.9,261.4 728.1,284.6 737.1,284.6 743.4,282.9 745.9,281.6 750.6,277.6 749.9,277.1 753.6,273.6 754.6,271.6 754.4,269.4 753.1,267.9 750.4,266.4 638.6,243.1 617.9,239.6 603.9,239.6 586.4,240.4Z"/>
<path fill="#ffc000" fill-rule="evenodd" d="M666.1,318.4 668.1,320.4 672.4,322.1 700.9,327.9 711.1,327.9 712.6,327.4 715.4,324.9 704.6,323.4 668.4,316.1ZM509.9,254.9 504.1,260.9 506.1,260.6 508.9,259.4 510.4,257.4ZM586.9,246.9 600.4,253.4 608.1,256.4 618.6,259.6 729.6,282.6 734.9,282.9 740.6,281.6 743.9,279.9 747.4,276.6 749.4,276.9 752.6,273.9 753.9,271.6 753.6,269.6 752.4,268.1 747.9,266.1 630.4,242.1 615.4,241.1 592.6,241.6Z"/>
<path fill="#ff9800" fill-rule="evenodd" d="M668.1,318.6 669.1,319.9 673.1,321.6 701.6,327.4 709.6,327.4 710.9,326.9 713.4,324.6 704.6,323.4 670.6,316.4ZM592.6,247.9 603.6,253.1 619.9,258.4 731.1,281.4 736.1,281.4 739.1,280.6 741.9,279.1 745.1,276.1 746.9,276.6 747.9,276.1 751.6,271.9 751.4,269.9 749.9,268.4 746.6,267.1 634.4,244.1 616.1,242.6 598.4,242.9Z"/>
<path fill="#ff7000" fill-rule="evenodd" d="M670.6,318.9 670.6,319.4 671.6,320.1 674.1,321.1 701.1,326.6 708.4,326.6 711.1,324.1 704.6,323.4 673.1,316.9ZM598.4,249.1 610.1,254.1 622.1,257.6 732.4,280.4 735.6,280.4 739.4,279.1 743.1,275.9 744.9,276.1 748.1,273.1 748.9,271.6 747.9,269.6 744.6,268.4 632.4,245.4 619.1,244.1 604.4,243.9Z"/>
<path fill="#ff4400" fill-rule="evenodd" d="M673.6,319.6 676.6,320.9 701.6,325.9 705.4,325.9 707.6,323.9 676.9,317.6 675.6,317.6ZM604.4,250.4 609.6,252.6 621.9,256.4 733.1,279.4 735.6,279.4 737.9,278.6 741.4,275.4 742.6,275.6 746.1,272.1 746.1,271.1 745.4,270.4 743.4,269.6 631.1,246.6 621.9,245.6 610.1,245.1Z"/>
<path fill="#ff1800" fill-rule="evenodd" d="M611.1,251.6 616.1,253.6 625.6,256.1 733.4,278.4 735.9,278.4 736.9,277.9 739.1,275.6 740.6,275.1 743.6,272.1 743.6,271.6 742.6,270.9 630.6,247.9 616.6,246.6Z"/>
</g>
<polyline points="490.5,274.5 511.8,252.5 511.8,249.5 521.5,240.5 548.5,234.8" fill="none" stroke="#0a0af0" stroke-width="4.2" stroke-linejoin="miter"/><polyline points="546,234.3 562,238 562,239.6 588.7,245.6 588.7,247.2 741,276" fill="none" stroke="#0a0af0" stroke-width="5.5" stroke-linejoin="miter"/>
<polyline points="493,279.5 518,285.5 705,323 735,328" fill="none" stroke="#30305a" stroke-width="0.9"/>
<clipPath id="trc"><polygon points="740.8,275 778,283.6 780.2,290.6 769.5,302.3 763.2,312 754.6,322.5 739.7,329 705,323.5 732,319 750.4,315.6 760,307.6 763.2,300 754.6,291.6 744,282"/></clipPath>
<polygon points="740.8,275 778,283.6 780.2,290.6 769.5,302.3 763.2,312 754.6,322.5 739.7,329 705,323.5 732,319 750.4,315.6 760,307.6 763.2,300 754.6,291.6 744,282" fill="#20a0f0" opacity=".35"/>
<g clip-path="url(#trc)"><path d="M550.0,255 l50,80M550.0,335 l50,-80M555.0,255 l50,80M555.0,335 l50,-80M560.0,255 l50,80M560.0,335 l50,-80M565.0,255 l50,80M565.0,335 l50,-80M570.0,255 l50,80M570.0,335 l50,-80M575.0,255 l50,80M575.0,335 l50,-80M580.0,255 l50,80M580.0,335 l50,-80M585.0,255 l50,80M585.0,335 l50,-80M590.0,255 l50,80M590.0,335 l50,-80M595.0,255 l50,80M595.0,335 l50,-80M600.0,255 l50,80M600.0,335 l50,-80M605.0,255 l50,80M605.0,335 l50,-80M610.0,255 l50,80M610.0,335 l50,-80M615.0,255 l50,80M615.0,335 l50,-80M620.0,255 l50,80M620.0,335 l50,-80M625.0,255 l50,80M625.0,335 l50,-80M630.0,255 l50,80M630.0,335 l50,-80M635.0,255 l50,80M635.0,335 l50,-80M640.0,255 l50,80M640.0,335 l50,-80M645.0,255 l50,80M645.0,335 l50,-80M650.0,255 l50,80M650.0,335 l50,-80M655.0,255 l50,80M655.0,335 l50,-80M660.0,255 l50,80M660.0,335 l50,-80M665.0,255 l50,80M665.0,335 l50,-80M670.0,255 l50,80M670.0,335 l50,-80M675.0,255 l50,80M675.0,335 l50,-80M680.0,255 l50,80M680.0,335 l50,-80M685.0,255 l50,80M685.0,335 l50,-80M690.0,255 l50,80M690.0,335 l50,-80M695.0,255 l50,80M695.0,335 l50,-80M700.0,255 l50,80M700.0,335 l50,-80M705.0,255 l50,80M705.0,335 l50,-80M710.0,255 l50,80M710.0,335 l50,-80M715.0,255 l50,80M715.0,335 l50,-80M720.0,255 l50,80M720.0,335 l50,-80M725.0,255 l50,80M725.0,335 l50,-80M730.0,255 l50,80M730.0,335 l50,-80M735.0,255 l50,80M735.0,335 l50,-80M740.0,255 l50,80M740.0,335 l50,-80M745.0,255 l50,80M745.0,335 l50,-80M750.0,255 l50,80M750.0,335 l50,-80M755.0,255 l50,80M755.0,335 l50,-80M760.0,255 l50,80M760.0,335 l50,-80M765.0,255 l50,80M765.0,335 l50,-80M770.0,255 l50,80M770.0,335 l50,-80M775.0,255 l50,80M775.0,335 l50,-80M780.0,255 l50,80M780.0,335 l50,-80M785.0,255 l50,80M785.0,335 l50,-80M790.0,255 l50,80M790.0,335 l50,-80M795.0,255 l50,80M795.0,335 l50,-80M800.0,255 l50,80M800.0,335 l50,-80M805.0,255 l50,80M805.0,335 l50,-80M810.0,255 l50,80M810.0,335 l50,-80M815.0,255 l50,80M815.0,335 l50,-80M820.0,255 l50,80M820.0,335 l50,-80M825.0,255 l50,80M825.0,335 l50,-80M830.0,255 l50,80M830.0,335 l50,-80M835.0,255 l50,80M835.0,335 l50,-80M840.0,255 l50,80M840.0,335 l50,-80M845.0,255 l50,80M845.0,335 l50,-80M690,262.0 l100,21M690,266.5 l100,21M690,271.0 l100,21M690,275.5 l100,21M690,280.0 l100,21M690,284.5 l100,21M690,289.0 l100,21M690,293.5 l100,21M690,298.0 l100,21M690,302.5 l100,21M690,307.0 l100,21M690,311.5 l100,21M690,316.0 l100,21M690,320.5 l100,21M690,325.0 l100,21M690,329.5 l100,21M690,334.0 l100,21M690,338.5 l100,21M690,343.0 l100,21M690,347.5 l100,21" stroke="#e040f0" stroke-width=".7" fill="none"/></g>
<polygon points="740.8,275 778,283.6 780.2,290.6 769.5,302.3 763.2,312 754.6,322.5 739.7,329 705,323.5 732,319 750.4,315.6 760,307.6 763.2,300 754.6,291.6 744,282" fill="none" stroke="#e040f0" stroke-width=".9"/>
<circle cx="656" cy="297.9" r="17" fill="#40d820" filter="url(#bl)"/>
</g>
<path d="M656 301 L656 313 L659 310.5 L661.5 315 L663 314.3 L660.7 309.8 L664.5 309.5 Z" fill="#fff" stroke="#333" stroke-width=".8"/>
<!-- axis -->
<path d="M1094.7 481.7 V456" stroke="#1a2ae0" stroke-width="1.3"/><path d="M1094.7 452.5 L1092.3 459 L1097.1 459Z" fill="#1a2ae0"/>
<path d="M1094.7 481.7 L1103.5 472.5" stroke="#208a30" stroke-width="1.2"/><path d="M1105.5 470.3 L1100.8 472.6 L1103.4 475.2Z" fill="#208a30"/>
<path d="M1094.7 481.7 L1119 487.3" stroke="#e03020" stroke-width="1.3"/><path d="M1124.5 488.5 L1117.6 484.6 L1116.5 489.6Z" fill="#e03020"/>
</svg>
<div class="a" style="left:1091px;top:441px;font-size:8.5px;color:#222">Z</div>
<div class="a" style="left:1105px;top:465px;font-size:6px;color:#444">Y</div>
<div class="a" style="left:1128px;top:485px;font-size:8.5px;color:#222">X</div>
<div class="a" style="left:1143px;top:46px;width:70px;height:484px;background:#efefef"></div>
<div class="a" style="left:1170px;top:64px;font-size:7px;color:#222;white-space:nowrap">[*10<sup style="font-size:5px;vertical-align:3px"> -3</sup> m]</div>
<svg style="left:0;top:0" width="1213" height="657">
<rect x="1150.5" y="79.30" width="24" height="26.56" fill="#ff1800" stroke="#222" stroke-width=".7"/>
<rect x="1150.5" y="105.86" width="24" height="26.56" fill="#ff4400" stroke="#222" stroke-width=".7"/>
<rect x="1150.5" y="132.43" width="24" height="26.56" fill="#ff7000" stroke="#222" stroke-width=".7"/>
<rect x="1150.5" y="158.99" width="24" height="26.56" fill="#ff9800" stroke="#222" stroke-width=".7"/>
<rect x="1150.5" y="185.55" width="24" height="26.56" fill="#ffc000" stroke="#222" stroke-width=".7"/>
<rect x="1150.5" y="212.11" width="24" height="26.56" fill="#fff010" stroke="#222" stroke-width=".7"/>
<rect x="1150.5" y="238.68" width="24" height="26.56" fill="#e0f030" stroke="#222" stroke-width=".7"/>
<rect x="1150.5" y="265.24" width="24" height="26.56" fill="#a0f060" stroke="#222" stroke-width=".7"/>
<rect x="1150.5" y="291.80" width="24" height="26.56" fill="#60e898" stroke="#222" stroke-width=".7"/>
<rect x="1150.5" y="318.36" width="24" height="26.56" fill="#38e0d0" stroke="#222" stroke-width=".7"/>
<rect x="1150.5" y="344.93" width="24" height="26.56" fill="#10e8f8" stroke="#222" stroke-width=".7"/>
<rect x="1150.5" y="371.49" width="24" height="26.56" fill="#08c0f8" stroke="#222" stroke-width=".7"/>
<rect x="1150.5" y="398.05" width="24" height="26.56" fill="#0898f8" stroke="#222" stroke-width=".7"/>
<rect x="1150.5" y="424.61" width="24" height="26.56" fill="#0868f8" stroke="#222" stroke-width=".7"/>
<rect x="1150.5" y="451.18" width="24" height="26.56" fill="#0838f8" stroke="#222" stroke-width=".7"/>
<rect x="1150.5" y="477.74" width="24" height="26.56" fill="#0000f8" stroke="#222" stroke-width=".7"/>
</svg>
<div class="lg" style="top:74.7px">32.00</div>
<div class="lg" style="top:101.3px">30.00</div>
<div class="lg" style="top:127.8px">28.00</div>
<div class="lg" style="top:154.4px">26.00</div>
<div class="lg" style="top:181.0px">24.00</div>
<div class="lg" style="top:207.5px">22.00</div>
<div class="lg" style="top:234.1px">20.00</div>
<div class="lg" style="top:260.6px">18.00</div>
<div class="lg" style="top:287.2px">16.00</div>
<div class="lg" style="top:313.8px">14.00</div>
<div class="lg" style="top:340.3px">12.00</div>
<div class="lg" style="top:366.9px">10.00</div>
<div class="lg" style="top:393.4px">8.00</div>
<div class="lg" style="top:420.0px">6.00</div>
<div class="lg" style="top:446.6px">4.00</div>
<div class="lg" style="top:473.1px">2.00</div>
<div class="lg" style="top:499.7px">0.00</div>
<svg style="left:1194px;top:510px" width="16" height="16"><rect x="0.5" y="0.5" width="14" height="14" rx="2" fill="#f2f2f2" stroke="#a8a8a8" stroke-width=".8"/><path d="M4.5 7 V5 A3 3 0 0 1 10.5 5 V7" fill="none" stroke="#a89060" stroke-width="1.1"/><rect x="3.5" y="6.5" width="8" height="6" rx="1" fill="#f2d27a" stroke="#c8a040" stroke-width=".6"/></svg>

<div id="cap" class="a"></div>
<svg style="left:146px;top:554px" width="16" height="10"><path d="M1 4 L5 1 L14 2 L14 6 L10 9 L1 8Z" fill="#f4b820" stroke="#d09000" stroke-width=".6"/><path d="M1 4 L10 5 L14 2 M10 5 V9" stroke="#d09000" stroke-width=".5" fill="none"/></svg>
<div class="a" style="left:631px;top:542px;font-size:8.4px;letter-spacing:0.15px;font-weight:bold;color:#111;white-space:nowrap">总位移 |u| (放大 500 倍)</div>
<div class="a" style="left:603px;top:556px;font-size:7.6px;color:#222;white-space:nowrap;letter-spacing:-0.32px">最大值 = 0.03184 m (单元 8680 在 节点 2592)</div>
<div id="cmd" class="a"></div>
<div class="a" style="left:141px;top:593px;font-size:7.6px;color:#222">命令行</div>
<div class="a" style="left:141px;top:617px;width:1072px;height:8px;background:#f2f2f2;border:1px solid #b8b8b8;border-right:0"></div>
<div class="a" style="left:168px;top:606px;width:36px;height:12px;background:linear-gradient(#ececec,#d8d8d8);border:1px solid #9a9a9a;border-bottom:0"></div>
<div class="a" style="left:141px;top:605px;width:27px;height:14px;background:#f8f8f8;border:1px solid #a8a8a8;border-bottom:0"></div>
<div class="a" style="left:145px;top:606px;font-size:8px;color:#111">会话</div>
<div class="a" style="left:171px;top:607px;font-size:7.6px;color:#111">模型历史</div>
<div class="a" style="left:168px;top:618.5px;width:90px;height:5.5px;overflow:hidden"><div style="position:absolute;top:-1.5px;left:0;font-size:7.6px;color:#20208a;white-space:nowrap">可以用以下方式输入命令:</div></div>
<div class="a" style="left:624px;top:614px;width:70px;height:4px;overflow:hidden"><div style="position:absolute;top:-2px;left:0;font-size:6px;color:#555;white-space:nowrap">nnlCommand</div></div>
<div class="a" style="left:141px;top:626px;width:1072px;height:15px;background:#e9e9e9;border-top:1px solid #c8c8c8"></div>
<div class="a" style="left:141px;top:627px;width:44px;height:14px;background:#dadada"></div>
<div class="a" style="left:143px;top:630px;font-size:7.6px;color:#222">命令</div>
<div class="a" style="left:1196px;top:626px;width:14px;height:15px;background:linear-gradient(#f2f2f2,#d8d8d8);border:1px solid #a8a8a8;border-radius:2px"></div>
<svg style="left:1199px;top:629px" width="9" height="9"><path d="M1.5 1 L8 4.5 L1.5 8Z" fill="#5ab848"/></svg>
<div id="status" class="a"></div>
<div class="a" style="left:0;top:643px;width:20px;height:12px;background:#eaeaea"></div>
<div class="a" style="left:20px;top:644px;width:126px;height:11px;background:#dcdcdc"></div>
<div class="a" style="left:146px;top:644px;width:1px;height:11px;background:#cfcfcf"></div>
<div class="a" style="left:269px;top:644px;width:1px;height:11px;background:#c0c0c0"></div>
<div class="a" style="left:460px;top:644px;width:1px;height:11px;background:#c0c0c0"></div>
<div class="a" style="left:652px;top:644px;width:1px;height:11px;background:#c0c0c0"></div>
<div class="a" style="left:149px;top:646px;font-size:7.6px;color:#222;white-space:nowrap">(247.542 97.288 0.000)</div>
<div class="a" style="left:276px;top:646px;font-size:7.6px;color:#222;white-space:nowrap">视角 (1189.496 -2032.107 1267.476)</div>
<div class="a" style="left:465px;top:646px;font-size:7.6px;color:#222;white-space:nowrap">Soil6287 （类组 2 ）[Soil_2_2]</div>
<div id="bot" class="a"></div>
<!-- video overlay progress line -->
<div class="a" style="left:15px;top:598px;width:439px;height:1px;background:#b8d4ec;opacity:.8"></div>
<div class="a" style="left:453px;top:593px;width:11px;height:11px;border:1px solid #a8c8e8;border-radius:50%"></div>

</body></html>
